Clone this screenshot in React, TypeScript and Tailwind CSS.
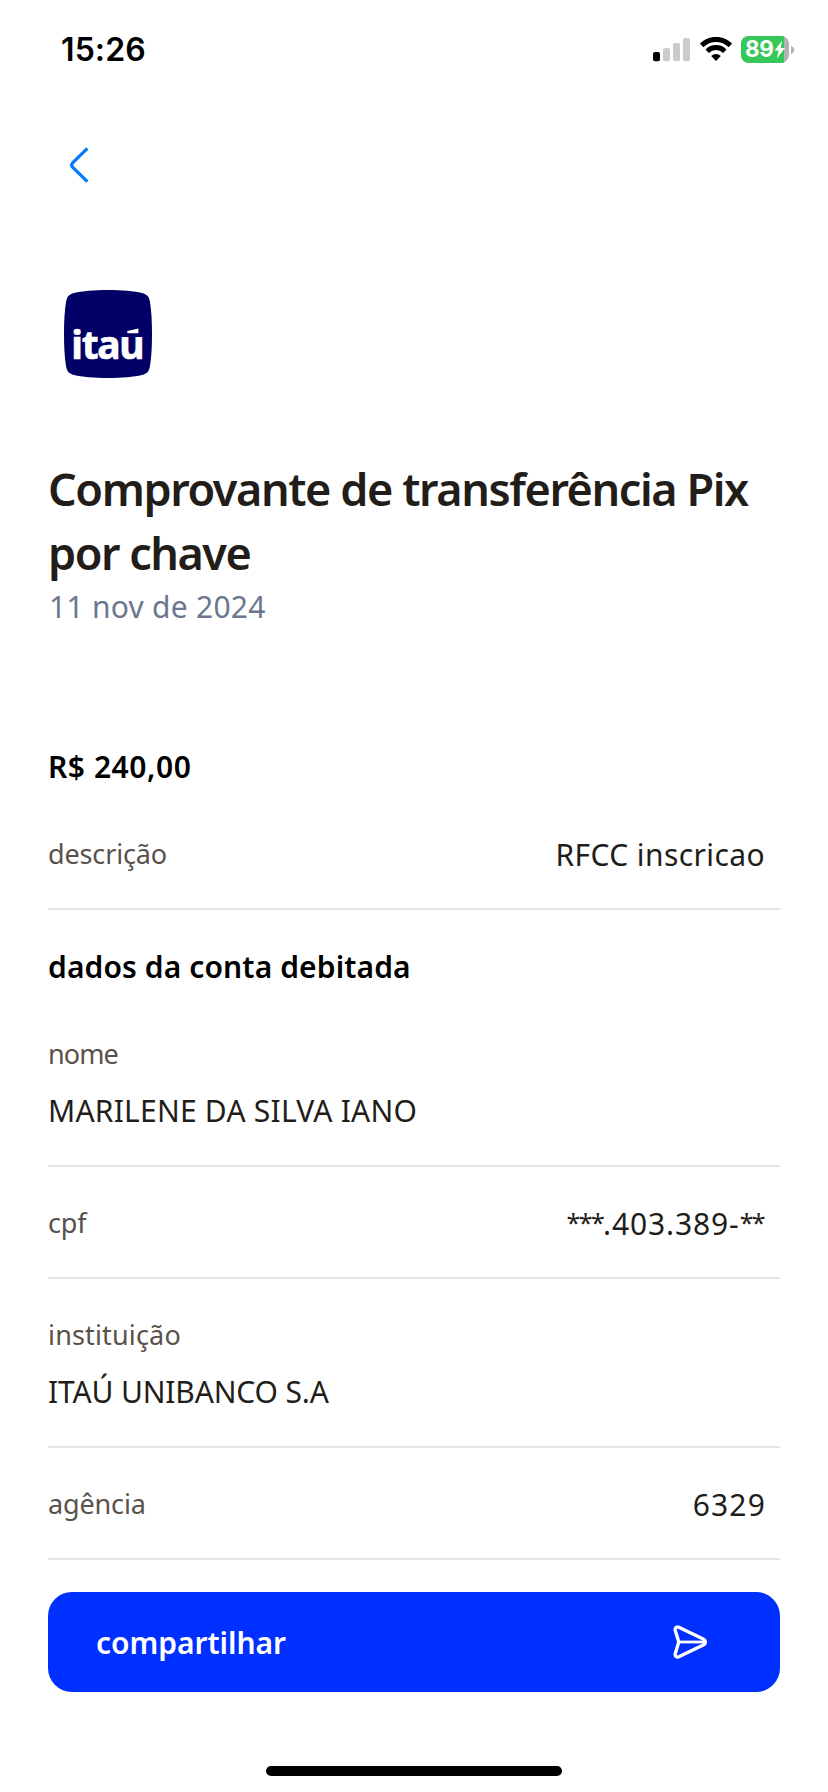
import React from "react";

function SignalIcon() {
  return (
    <svg width="38" height="24" viewBox="0 0 38 24" aria-hidden="true">
      <rect x="0" y="14" width="7" height="9.2" rx="2" fill="#000" />
      <rect x="10" y="10" width="7" height="13.2" rx="2" fill="#cbcbcb" />
      <rect x="20" y="5" width="7" height="18.2" rx="2" fill="#cbcbcb" />
      <rect x="30" y="0" width="7" height="23.2" rx="2" fill="#cbcbcb" />
    </svg>
  );
}

function WifiIcon() {
  return (
    <svg width="32" height="24" viewBox="0 0 32 24" aria-hidden="true">
      <path d="M1.7 8.4A20 20 0 0 1 30.3 8.4" fill="none" stroke="#000" strokeWidth="5" />
      <path d="M7.2 14.2A12.3 12.3 0 0 1 24.8 14.2" fill="none" stroke="#000" strokeWidth="4.8" />
      <path d="M11.2 19A6.8 6.8 0 0 1 20.8 19L16 24Z" fill="#000" />
    </svg>
  );
}

function Battery() {
  return (
    <div className="flex items-center gap-[2px]">
      <div className="relative flex h-[27px] w-[48px] overflow-hidden rounded-[8px] bg-[#b3b3b3]">
        <div className="flex h-full w-[43px] items-center bg-[#34c759] pl-[4px]">
          <span className="font-['Inter',sans-serif] text-[22.5px] leading-none font-bold tracking-[-0.4px] text-white">
            89
          </span>
        </div>
        <svg className="absolute top-[4px] left-[33px]" width="12" height="19" viewBox="0 0 12 19" aria-hidden="true">
          <path d="M8.2 0.6L0.6 10.4H4.6L2.8 18.4L11 8H6.6Z" fill="#fff" />
        </svg>
      </div>
      <svg width="4" height="8" viewBox="0 0 4 8" aria-hidden="true">
        <path d="M0 0C2.2 0.8 3.2 2.2 3.2 4S2.2 7.2 0 8Z" fill="#b3b3b3" />
      </svg>
    </div>
  );
}

function BankLogo() {
  return (
    <svg width="88" height="88" viewBox="0 0 88 88">
      <defs>
        <clipPath id="wordmark">
          <path d="M0 0H57V47H88V88H0Z" />
        </clipPath>
      </defs>
      <path
        d="M44 0C58 0 70 1 78 3C83 4.3 84.8 6.4 85.8 11C87.4 20 88 31 88 44S87.4 68 85.8 77C84.8 81.6 83 83.7 78 85C70 87 58 88 44 88S18 87 10 85C5 83.7 3.2 81.6 2.2 77C0.6 68 0 57 0 44S0.6 20 2.2 11C3.2 6.4 5 4.3 10 3C18 1 30 0 44 0Z"
        fill="#000066"
      />
      <g clipPath="url(#wordmark)">
        <text
          x="7.3"
          y="69"
          className="fill-white stroke-white stroke-[0.6px] font-['Noto_Sans',sans-serif] text-[39px] font-bold tracking-[-1.3px]"
        >
          itaú
        </text>
      </g>
      <path d="M63.3 41L74.4 38.4V43.2H63.3Z" fill="#fff" />
    </svg>
  );
}

function SendIcon() {
  return (
    <svg width="36" height="36" viewBox="0 0 36 36" fill="none" stroke="#fff" strokeLinejoin="round" aria-hidden="true">
      <path
        d="M3.2 6.2C2.7 3.9 4.6 2.2 6.8 3.2L31.2 15C34.2 16.6 34.2 19.4 31.2 21L6.8 32.8C4.6 33.8 2.7 32.1 3.2 29.8L6.8 18Z"
        strokeWidth="3.4"
      />
      <path d="M7 18H32" strokeWidth="2.8" />
    </svg>
  );
}

const label = "text-[27px] leading-10 text-[#59524c]";
const value = "pt-px text-[30px] leading-10 text-[#231d19]";
const mask = "relative -top-[3px] text-[25px] leading-none tracking-[-1.6px]";
const row = "flex h-[112px] items-start justify-between border-b-2 border-[#e4e4ea] pt-9";
const stack = "flex flex-col gap-4 border-b-2 border-[#e4e4ea] pb-[34px]";

export default function App() {
  return (
    <div className="flex h-[1792px] w-[828px] flex-col overflow-hidden bg-white font-['Noto_Sans',sans-serif]">
      <header className="flex h-[100px] items-start justify-between pr-[33px] pl-[61px]">
        <span className="mt-[30px] font-['Inter',sans-serif] text-[32px] leading-10 font-semibold tracking-[0.1px] text-black">
          15:26
        </span>
        <div className="mt-9 flex items-start">
          <div className="mt-[2px]">
            <SignalIcon />
          </div>
          <div className="mt-px ml-[8.5px]">
            <WifiIcon />
          </div>
          <div className="ml-[9.5px]">
            <Battery />
          </div>
        </div>
      </header>

      <nav className="flex h-[190px] items-start pt-[46px] pl-[68px]">
        <button aria-label="voltar">
          <svg width="24" height="38" viewBox="0 0 24 38" fill="none" aria-hidden="true">
            <path d="M19.4 2.4L4.6 16.8Q2.6 19 4.6 21.2L19.4 35.6" stroke="#007aff" strokeWidth="3.2" />
          </svg>
        </button>
      </nav>

      <div className="h-[167px] pl-16">
        <BankLogo />
      </div>

      <main className="mx-12 flex flex-col">
        <h1 className="text-[45px] leading-[64px] font-semibold text-[#231d19]">
          <span className="block tracking-[-1.42px] whitespace-nowrap">Comprovante de transferência Pix</span>
          <span className="block tracking-[-1.5px]">por chave</span>
        </h1>
        <p className="mt-[2px] pl-px text-[30px] leading-10 tracking-[0.26px] text-[#6b778c]">11 nov de 2024</p>

        <p className="mt-[120px] text-[30px] leading-10 font-semibold tracking-[0.55px] text-black">R$ 240,00</p>

        <div className="mt-[47px] flex h-[76px] items-start justify-between border-b-2 border-[#e4e4ea]">
          <span className={label + " tracking-[-0.15px]"}>descrição</span>
          <span className={value + " mr-[15px] tracking-[0.4px]"}>RFCC inscricao</span>
        </div>

        <h2 className="mt-[37px] text-[30px] leading-10 font-semibold tracking-[0.11px] text-black">
          dados da conta debitada
        </h2>

        <div className={stack + " mt-[47px]"}>
          <span className={label + " tracking-[-0.9px]"}>nome</span>
          <span className={value + " tracking-[0.22px]"}>MARILENE DA SILVA IANO</span>
        </div>

        <div className={row}>
          <span className={label + " tracking-[-0.2px]"}>cpf</span>
          <span className={value + " mr-[16px] tracking-[0.87px]"}>
            <span className={mask}>***</span>
            .403.389-
            <span className={mask}>**</span>
          </span>
        </div>

        <div className={stack + " pt-9"}>
          <span className={label + " tracking-[0.16px]"}>instituição</span>
          <span className={value + " tracking-[-0.15px]"}>ITAÚ UNIBANCO S.A</span>
        </div>

        <div className={row}>
          <span className={label + " tracking-[-0.15px]"}>agência</span>
          <span className={value + " mr-[14px] tracking-[1.17px]"}>6329</span>
        </div>

        <button className="mt-8 flex h-[100px] items-center justify-between rounded-[24px] bg-[#0030ff] pr-[72px] pl-12">
          <span className="pt-[2px] text-[30px] leading-10 font-semibold tracking-[-0.05px] text-white">compartilhar</span>
          <SendIcon />
        </button>
      </main>

      <div className="mx-auto mt-[74px] h-[10px] w-[296px] rounded-full bg-black" />
    </div>
  );
}
